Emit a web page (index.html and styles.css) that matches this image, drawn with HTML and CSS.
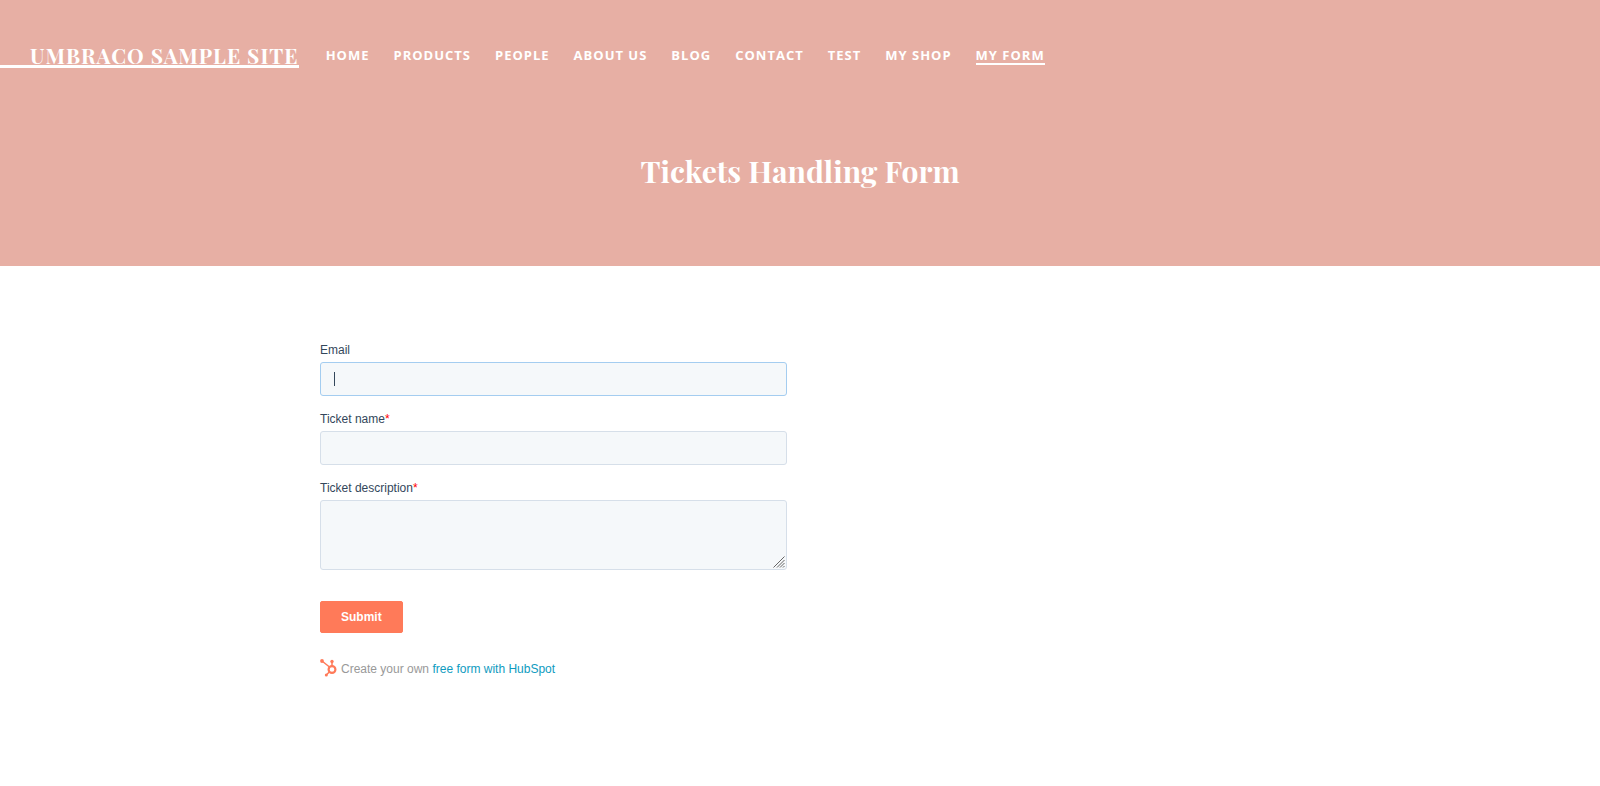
FILE: index.html
```html
<!DOCTYPE html>
<html lang="en">
<head>
    <meta charset="UTF-8">
    <meta name="viewport" content="width=device-width, initial-scale=1.0">
    <title>My Form - Umbraco Sample Site</title>
    <link rel="stylesheet" href="styles.css">
</head>
<body>
    <header class="header">
        <a href="#" class="logo">Umbraco Sample Site</a>
        <nav class="nav-bar">
            <a href="#" class="nav-link">Home</a>
            <a href="#" class="nav-link">Products</a>
            <a href="#" class="nav-link">People</a>
            <a href="#" class="nav-link">About Us</a>
            <a href="#" class="nav-link">Blog</a>
            <a href="#" class="nav-link">Contact</a>
            <a href="#" class="nav-link">Test</a>
            <a href="#" class="nav-link">My Shop</a>
            <a href="#" class="nav-link nav-link--active">My Form</a>
        </nav>
    </header>

    <section class="hero">
        <h1>Tickets Handling Form</h1>
    </section>

    <main class="content">
        <form class="ticket-form">
            <div class="field">
                <label for="email">Email</label>
                <div class="input input--focus">
                    <input type="email" id="email" name="email">
                </div>
            </div>
            <div class="field">
                <label for="subject">Ticket name<span class="required">*</span></label>
                <div class="input">
                    <input type="text" id="subject" name="subject" required>
                </div>
            </div>
            <div class="field">
                <label for="description">Ticket description<span class="required">*</span></label>
                <div class="input">
                    <textarea id="description" name="description" required></textarea>
                    <svg class="grip" viewBox="0 0 12 12" aria-hidden="true">
                        <path d="M0.5 11.5L11.5 0.5M4 11.5L11.5 4M7 11.5L11.5 7M10 11.5L11.5 10"/>
                    </svg>
                </div>
            </div>

            <button type="submit" class="submit">Submit</button>

            <div class="hubspot">
                <svg class="sprocket" viewBox="0 0 17 18" aria-hidden="true">
                    <path d="M2 2L9.500 8M12 2.500V7M9.500 12.800L6.300 16"/>
                    <circle class="ring" cx="12" cy="10.500" r="3.400"/>
                    <circle class="dot" cx="2" cy="2" r="1.900"/>
                    <circle class="dot" cx="12" cy="2.500" r="1.700"/>
                    <circle class="dot" cx="6.300" cy="16" r="1.500"/>
                </svg>
                <span class="hubspot-text">Create your own <a href="#">free form with HubSpot</a></span>
            </div>
        </form>
    </main>
</body>
</html>
```

FILE: styles.css
```css
:root {
    --rose: #e7afa4;
    --orange: #ff7a59;
    --text: #33475b;
    --field: #f5f8fa;
}

* {
    margin: 0;
    padding: 0;
    box-sizing: border-box;
}

body {
    background: white;
    color: var(--text);
    font-family: "Liberation Sans", Arial, sans-serif;
    font-size: 12px;
}

/* Header */
.header {
    display: flex;
    align-items: center;
    gap: 27px;
    padding-top: 44px;
    background: var(--rose);
}

.logo {
    padding: 2px 0 0 30px;
    border-bottom: 3px solid white;
    color: white;
    font-family: "Playfair Display", "Liberation Serif", serif;
    font-size: 21px;
    font-weight: bold;
    line-height: 19px;
    letter-spacing: 1px;
    text-transform: uppercase;
    text-decoration: none;
    white-space: nowrap;
}

.nav-bar {
    display: flex;
    flex-wrap: wrap;
    gap: 24px;
}

.nav-link {
    padding: 1px 0;
    border-bottom: 2px solid transparent;
    color: white;
    font-family: "Open Sans", sans-serif;
    font-size: 13px;
    font-weight: bold;
    line-height: 14px;
    letter-spacing: 1px;
    text-transform: uppercase;
    text-decoration: none;
}

.nav-link--active {
    border-color: white;
}

/* Hero */
.hero {
    padding: 81px 20px 73px;
    background: var(--rose);
    color: white;
    text-align: center;
}

.hero h1 {
    font-family: "Playfair Display", "Liberation Serif", serif;
    font-size: 30px;
    line-height: 44px;
}

/* Form */
.content {
    width: 60%;
    margin: 0 auto;
    padding: 76px 0;
}

.ticket-form {
    max-width: 467px;
}

.field {
    margin-bottom: 15px;
}

.field label {
    display: block;
    margin-bottom: 4px;
    line-height: 16px;
}

.required {
    color: red;
}

.input {
    position: relative;
}

.input input,
.input textarea {
    display: block;
    width: 100%;
    height: 34px;
    padding: 8px 12px;
    border: 1px solid #d6dfe9;
    border-radius: 3px;
    background: var(--field);
    color: var(--text);
    font: inherit;
    outline: none;
}

.input textarea {
    height: 70px;
    resize: none;
}

.input--focus input {
    border-color: #a4cdf0;
    caret-color: transparent;
}

/* Text cursor */
.input--focus::after {
    content: "";
    position: absolute;
    top: 10px;
    left: 14px;
    width: 1px;
    height: 14px;
    background: var(--text);
}

.grip {
    position: absolute;
    right: 2px;
    bottom: 2px;
    width: 12px;
    height: 12px;
    fill: none;
    stroke: #666;
}

.submit {
    display: block;
    margin-top: 31px;
    padding: 8px 20px;
    border: 1px solid var(--orange);
    border-radius: 2px;
    background: var(--orange);
    color: white;
    font: bold 12px/14px "Liberation Sans", Arial, sans-serif;
}

.hubspot {
    display: flex;
    align-items: center;
    gap: 4px;
    margin-top: 26px;
    color: #999;
}

.hubspot-text {
    padding-top: 2px;
    line-height: 16px;
}

.hubspot a {
    color: #0e9bc0;
    text-decoration: none;
}

.sprocket {
    width: 17px;
    height: 18px;
    fill: none;
    stroke: var(--orange);
    stroke-width: 1.5;
}

.sprocket .ring {
    stroke-width: 2.2;
}

.sprocket .dot {
    fill: var(--orange);
    stroke: none;
}
```
